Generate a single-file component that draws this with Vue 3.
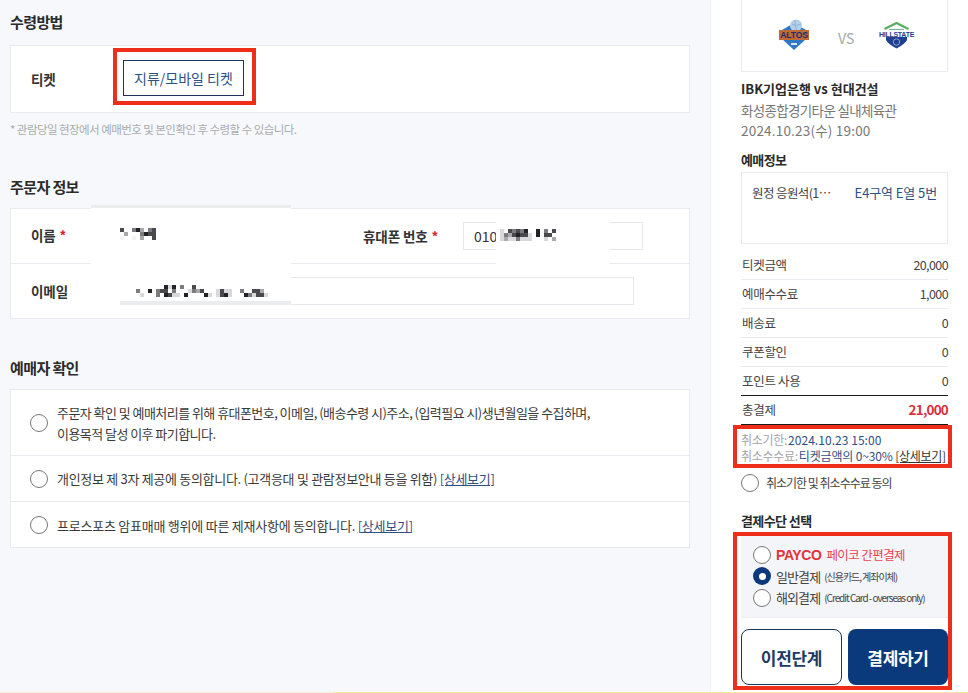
<script setup>
const shades = { '.': 'transparent', f: '#f4f4f5', l: '#d9d9db', m: '#a9a9ac', g: '#7c7c80', d: '#4a4a4e', k: '#232327' }
const nameCells = ['d..gkm.gd', '.m...gkdd', 'f..f.m..d']
const phoneCells = ['l.dgdgk..k.g.d', 'lgmdkddl.k.dd.', 'lmllglll...l.m']
const emailCells = [
  '.......klk.g..d',
  'g..k.gdd.g...lgmd...ldll..g..ddm',
  '.l...g.kdll.k....kl.ldkl...kglddl',
]
const radioRows = [
  { id: 1, lines: ['주문자 확인 및 예매처리를 위해 휴대폰번호, 이메일, (배송수령 시)주소, (입력필요 시)생년월일을 수집하며,', '이용목적 달성 이후 파기합니다.'], link: '' },
  { id: 2, lines: ['개인정보 제 3자 제공에 동의합니다. (고객응대 및 관람정보안내 등을 위함)'], link: '[상세보기]' },
  { id: 3, lines: ['프로스포츠 암표매매 행위에 따른 제재사항에 동의합니다.'], link: '[상세보기]' },
]
const prices = [
  ['티켓금액', '20,000'],
  ['예매수수료', '1,000'],
  ['배송료', '0'],
  ['쿠폰할인', '0'],
  ['포인트 사용', '0'],
]
</script>

<template>
  <div class="page">
    <main class="left">
      <h2 class="h2 first">수령방법</h2>
      <section class="card ticket-card">
        <span class="label ticket-label">티켓</span>
        <div class="red-ticket"><button class="ticket-btn">지류/모바일 티켓</button></div>
      </section>
      <p class="note">* 관람당일 현장에서 예매번호 및 본인확인 후 수령할 수 있습니다.</p>

      <h2 class="h2 second">주문자 정보</h2>
      <section class="card orderer">
        <div class="order-row">
          <span class="label name-label">이름 <i>*</i></span>
          <span class="label phone-label">휴대폰 번호 <i>*</i></span>
          <div class="fake-input phone-input">010</div>
        </div>
        <div class="order-row last">
          <span class="label name-label">이메일</span>
          <div class="fake-input email-input"></div>
        </div>
        <div class="patch patch-main"></div>
        <div class="strip strip-top"></div>
        <div class="strip strip-mail"></div>
        <div class="patch patch-phone"></div>
        <div class="mosaic mosaic-name">
          <div v-for="(r, i) in nameCells" :key="i" class="mrow">
            <b v-for="(c, j) in r" :key="j" :style="{ background: shades[c] }"></b>
          </div>
        </div>
        <div class="mosaic mosaic-phone">
          <div v-for="(r, i) in phoneCells" :key="i" class="mrow">
            <b v-for="(c, j) in r" :key="j" :style="{ background: shades[c] }"></b>
          </div>
        </div>
        <div class="mosaic mosaic-email">
          <div v-for="(r, i) in emailCells" :key="i" class="mrow">
            <b v-for="(c, j) in r" :key="j" :style="{ background: shades[c] }"></b>
          </div>
        </div>
      </section>

      <h2 class="h2 third">예매자 확인</h2>
      <section class="card agree">
        <div v-for="row in radioRows" :key="row.id" class="agree-row" :class="'a' + row.id">
          <span class="radio"></span>
          <div class="agree-text">
            <div v-for="l in row.lines" :key="l">{{ l }} <a v-if="row.link">{{ row.link }}</a></div>
          </div>
        </div>
      </section>
    </main>

    <aside class="side">
      <div class="match">
        <svg class="logo" width="30" height="32" viewBox="0 0 30 32">
          <path d="M15 4 L27 11 L27 20 L15 31 L3 20 L3 11 Z" fill="#2f78c4" />
          <circle cx="17" cy="6.5" r="6" fill="#b4cfe9" />
          <path d="M13 5 Q17 8 22 5 M16 1 Q15 7 18 12" fill="none" stroke="#7fa8d2" stroke-width=".7" />
          <rect x="0" y="11" width="30" height="10" fill="#bd6a34" />
          <text x="15" y="19.4" text-anchor="middle" class="altos">ALTOS</text>
          <rect x="12" y="24" width="6" height="2" fill="#d5e6f6" />
        </svg>
        <span class="vs">VS</span>
        <svg class="logo" width="31" height="27" viewBox="0 0 31 27">
          <path d="M3.5 7 L15.5 1 L27.5 7" fill="none" stroke="#59ad5c" stroke-width="2.2" />
          <path d="M8 7.5 H23" stroke="#7bb3a0" stroke-width="1.2" />
          <path d="M5 15 H26 V18 Q24 22 15.5 26.5 Q7 22 5 18 Z" fill="#1f3f8f" />
          <text x="15.5" y="14.6" text-anchor="middle" class="hill">HILLSTATE</text>
          <circle cx="15.5" cy="20" r="3.2" fill="none" stroke="#a9bce2" stroke-width=".8" />
        </svg>
      </div>
      <div class="title">IBK기업은행 vs 현대건설</div>
      <div class="sub venue">화성종합경기타운 실내체육관</div>
      <div class="sub when">2024.10.23(수) 19:00</div>
      <h3 class="h3 info-h">예매정보</h3>
      <div class="seat-box">
        <span class="seat-name">원정 응원석(1…</span>
        <span class="seat-no">E4구역 E열 5번</span>
      </div>
      <div class="prices">
        <div v-for="p in prices" :key="p[0]" class="price-row">
          <span>{{ p[0] }}</span><span class="val">{{ p[1] }}</span>
        </div>
        <div class="price-row total">
          <span>총결제</span><strong>21,000</strong>
        </div>
      </div>
      <div class="red-box cancel">
        <div><span class="mute">취소기한:</span><span class="blue">2024.10.23 15:00</span></div>
        <div class="nowrap"><span class="mute">취소수수료:</span><span class="blue">티켓금액의 0~30%</span> <a class="detail">[상세보기]</a></div>
      </div>
      <div class="agree-cancel"><span class="radio"></span><span class="agree-cancel-text">취소기한 및 취소수수료 동의</span></div>
      <h3 class="h3 pay-h">결제수단 선택</h3>
      <div class="red-box pay">
        <div class="pay-options">
          <div class="opt"><span class="radio sm"></span><span class="payco">PAYCO</span><span class="payco-k">페이코 간편결제</span></div>
          <div class="opt"><span class="radio sm on"></span><span class="opt-name">일반결제</span><small>(신용카드, 계좌이체)</small></div>
          <div class="opt"><span class="radio sm"></span><span class="opt-name">해외결제</span><small>(Credit Card - overseas only)</small></div>
        </div>
        <div class="btns">
          <button class="btn prev">이전단계</button>
          <button class="btn next">결제하기</button>
        </div>
      </div>
    </aside>
  </div>
</template>

<style>
html, body { margin: 0; background: #f7f8fb; }
</style>

<style scoped>
.page {
  display: flex;
  width: 968px;
  height: 693px;
  overflow: hidden;
  background: #f7f8fb;
  font-family: "Noto Sans CJK KR", "Noto Sans", sans-serif;
  color: #333;
  position: relative;
}
.page::after {
  content: "";
  position: absolute;
  left: 0;
  right: 0;
  bottom: 0;
  height: 1px;
  background: linear-gradient(to right, #f8ecd8 333px, #fbe6a8 333px);
}
.left { width: 680px; padding: 11px 20px 0 10px; flex: none; }
.h2 { margin: 0; height: 22px; line-height: 22px; font-size: 15px; font-weight: 700; color: #2b2b2b; letter-spacing: -0.6px; }
.h2.first { margin-bottom: 12px; }
.h2.second { margin-top: 39px; margin-bottom: 10px; }
.h2.third { margin-top: 38px; margin-bottom: 10px; }
.card { background: #fff; border: 1px solid #e9ebef; box-sizing: border-box; width: 680px; position: relative; }
.label { font-size: 13.5px; font-weight: 700; color: #333; letter-spacing: -0.1px; }
.label i { color: #d8232f; font-style: normal; margin-left: 1px; }

.ticket-card { height: 68px; display: flex; align-items: center; }
.ticket-label { margin-left: 20px; width: 82px; }
.red-ticket { border: 4px solid #ee2d1b; width: 143px; height: 57px; box-sizing: border-box; padding: 8px 0 0 6px; margin-top: -5px; }
.ticket-btn {
  display: block; width: 121px; height: 36px; padding: 0; background: #fff; border: 1px solid #1f3556;
  color: #2f4f85; font: 14px/32px "Noto Sans CJK KR", sans-serif; letter-spacing: 0;
}
.note { margin: 8px 0 0; height: 16px; line-height: 16px; font-size: 11.5px; color: #a9abae; letter-spacing: -0.55px; }

.orderer { height: 111px; }
.order-row { height: 54px; border-bottom: 1px solid #e9ebef; position: relative; }
.order-row.last { border-bottom: 0; }
.name-label { position: absolute; left: 20px; top: 16px; line-height: 20px; }
.last .name-label { top: 17px; }
.phone-label { position: absolute; left: 352px; top: 17px; line-height: 20px; }
.fake-input { position: absolute; box-sizing: border-box; background: #fff; border: 1px solid #e7e8ec; font-size: 14px; color: #333; }
.phone-input { left: 452px; top: 13px; width: 180px; height: 28px; line-height: 27px; padding-left: 10px; }
.email-input { left: 109px; top: 13px; width: 514px; height: 28px; }
.patch { position: absolute; background: #fff; }
.patch-main { left: 80px; top: -1px; width: 200px; height: 110px; }
.patch-phone { left: 485px; top: 12px; width: 113px; height: 44px; }
.strip { position: absolute; background: #ebecee; height: 3px; }
.strip-top { left: 80px; top: -4px; width: 200px; }
.strip-mail { left: 109px; top: 92px; width: 171px; height: 4px; }
.mosaic { position: absolute; display: flex; flex-direction: column; }
.mrow { display: flex; height: 4px; }
.mrow b { display: block; width: 4px; height: 4px; flex: none; }
.mosaic-name { left: 109px; top: 19px; }
.mosaic-phone { left: 489px; top: 20px; }
.mosaic-email { left: 125px; top: 76px; }

.agree { height: 159px; }
.agree-row { display: flex; align-items: center; padding-left: 19px; border-bottom: 1px solid #e9ebef; box-sizing: border-box; }
.agree-row:last-child { border-bottom: 0; }
.a1 { height: 66px; }
.a2, .a3 { height: 46px; }
.radio { display: block; flex: none; width: 18px; height: 18px; box-sizing: border-box; border: 1px solid #777; border-radius: 50%; background: #fff; }
.agree-text { margin-left: 9px; font-size: 13px; line-height: 21px; color: #3a3a3a; letter-spacing: -0.55px; }
.a2 .agree-text { letter-spacing: -0.3px; }
.a3 .agree-text { letter-spacing: -0.24px; }
.agree-text a { color: #2f4f85; text-decoration: underline; }

.side { width: 258px; flex: none; box-sizing: border-box; background: #fff; border-left: 1px solid #eef0f4; padding: 0 20px 0 30px; position: relative; }
.match { height: 72px; box-sizing: border-box; border: 1px solid #e9ebef; border-top: 0; position: relative; }
.logo { position: absolute; overflow: visible; }
.match .logo:first-child { left: 37px; top: 19px; }
.match .logo:last-child { left: 139px; top: 22px; }
.altos { font: 700 8.5px "Liberation Sans", sans-serif; fill: #1b2f66; letter-spacing: -.1px; }
.hill { font: 700 7px "Liberation Sans", sans-serif; fill: #1f3f8f; letter-spacing: -.25px; }
.vs { position: absolute; left: 96px; top: 28px; font-size: 14px; line-height: 20px; color: #a5a7aa; }
.title { margin-top: 8px; height: 18px; line-height: 18px; font-size: 13px; font-weight: 700; color: #2a2a2a; letter-spacing: 0; }
.sub { height: 20px; line-height: 20px; font-size: 13.5px; color: #777; }
.venue { margin-top: 2px; letter-spacing: -0.65px; }
.when { letter-spacing: 0.2px; }
.h3 { margin: 0; height: 18px; line-height: 18px; font-size: 13px; font-weight: 700; color: #2a2a2a; letter-spacing: -0.6px; }
.info-h { margin-top: 11px; }
.seat-box { margin-top: 3px; height: 72px; box-sizing: border-box; border: 1px solid #e9ebef; display: flex; justify-content: space-between; padding: 10px 10px 0 10px; font-size: 12.5px; line-height: 20px; }
.seat-name { color: #444; letter-spacing: -0.6px; }
.seat-no { color: #2f4f85; font-size: 13px; letter-spacing: -0.1px; }
.prices { margin-top: 7px; }
.price-row { height: 29px; box-sizing: border-box; border-bottom: 1px solid #e9ebf0; display: flex; justify-content: space-between; align-items: center; padding: 0 0 2px 1px; font-size: 12.5px; color: #444; letter-spacing: -0.3px; }
.val { letter-spacing: -0.6px; }
.price-row:nth-child(5), .price-row.total { border-bottom-color: #1a1a1a; }
.total strong { color: #d8303c; font-size: 13.5px; font-weight: 700; letter-spacing: -0.8px; }
.red-box { border: 4px solid #ee2d1b; margin: 0 -4px 0 -8px; padding-left: 4px; }
.cancel { height: 43px; box-sizing: border-box; padding-top: 3px; font-size: 12px; line-height: 16px; letter-spacing: -0.25px; }
.nowrap { white-space: nowrap; }
.mute { color: #a3a5a8; margin-right: 1px; letter-spacing: -0.3px; }
.blue { color: #2f4f85; letter-spacing: -0.15px; }
.cancel > div:first-child .blue { letter-spacing: 0.05px; }
.detail { color: #333; text-decoration: underline; }
.agree-cancel { margin-top: 5px; height: 20px; display: flex; align-items: center; gap: 7px; font-size: 12px; color: #444; letter-spacing: -1px; }
.agree-cancel-text { padding-bottom: 2px; }
.pay-h { margin-top: 19px; margin-bottom: 2px; }
.pay { height: 158px; box-sizing: border-box; }
.pay-options { height: 82px; box-sizing: border-box; background: #f4f5f9; border-bottom: 1px solid #eceef2; padding: 8px 0 0 12px; }
.opt { height: 21.5px; display: flex; align-items: center; white-space: nowrap; }
.radio.sm { margin-right: 5px; }
.radio.on { border: 0; background: #0a3a7c; position: relative; }
.radio.on::after { content: ""; position: absolute; left: 5.5px; top: 5.5px; width: 7px; height: 7px; border-radius: 50%; background: #fff; }
.payco { font: 700 14px/20px "Liberation Sans", sans-serif; color: #e8303c; letter-spacing: -0.4px; margin-right: 5px; }
.payco-k { font-size: 12.5px; color: #e8434e; letter-spacing: -0.6px; }
.opt-name { font-size: 13px; color: #444; letter-spacing: -0.9px; margin-right: 4px; }
small { font-size: 10px; color: #444; letter-spacing: -1.05px; }
.btns { display: flex; justify-content: space-between; padding: 11px 0 0 0; }
.btn { height: 56px; box-sizing: border-box; border-radius: 8px; font: 700 17px "Noto Sans CJK KR", sans-serif; letter-spacing: -0.3px; padding: 0; }
.btn.prev { width: 101px; background: #fff; border: 1px solid #1c3556; color: #1c3a66; }
.btn.next { width: 100px; background: #0a3a7c; border: 0; color: #fff; }
</style>
